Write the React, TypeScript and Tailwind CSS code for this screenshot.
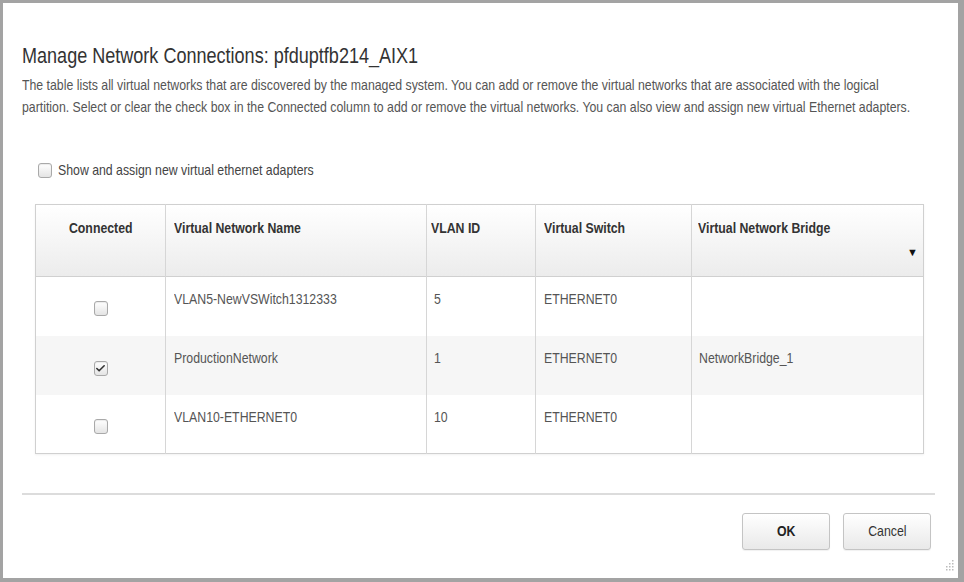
import type { ReactNode } from 'react'
import { Check } from 'lucide-react'

interface NetworkRow {
  connected: boolean
  name: string
  vlan: string
  vswitch: string
  bridge: string
}

const rows: NetworkRow[] = [
  { connected: false, name: 'VLAN5-NewVSWitch1312333', vlan: '5', vswitch: 'ETHERNET0', bridge: '' },
  { connected: true, name: 'ProductionNetwork', vlan: '1', vswitch: 'ETHERNET0', bridge: 'NetworkBridge_1' },
  { connected: false, name: 'VLAN10-ETHERNET0', vlan: '10', vswitch: 'ETHERNET0', bridge: '' },
]

// the page uses a narrow sans; squeeze Liberation Sans to Arial Narrow proportions
function Narrow({ children, center = false }: { children: ReactNode; center?: boolean }) {
  return (
    <span className={`inline-block scale-x-[0.82] whitespace-nowrap ${center ? 'origin-center' : 'origin-left'}`}>
      {children}
    </span>
  )
}

function Box({ checked }: { checked: boolean }) {
  return (
    <span className="inline-flex h-[15px] w-[14px] items-center justify-center rounded-[3px] border border-[#a9a9a9] bg-gradient-to-b from-white to-[#e4e4e4] shadow-[inset_0_1px_1px_rgba(0,0,0,0.08)]">
      {checked && <Check className="h-[11px] w-[11px] text-[#333]" strokeWidth={3.5} />}
    </span>
  )
}

export default function App() {
  return (
    <div
      className="h-[582px] w-[964px] overflow-hidden bg-[#a3a3a3] pb-[4px] pl-[3px] pr-[6px] pt-[3px]"
      style={{ fontFamily: '"Liberation Sans", Arial, sans-serif' }}
    >
      <div className="relative flex h-full flex-col overflow-hidden bg-white pl-[19px] pr-[22px] pt-[38px]">
        <h1 className="text-[22px] leading-[30px] text-[#333]">
          <Narrow>Manage Network Connections: pfduptfb214_AIX1</Narrow>
        </h1>
        <div className="mt-[3px] text-[15px] leading-[22px] text-[#555]">
          <div>
            <Narrow>
              The table lists all virtual networks that are discovered by the managed system. You can add or remove the virtual networks that are associated with the logical
            </Narrow>
          </div>
          <div>
            <Narrow>
              partition. Select or clear the check box in the Connected column to add or remove the virtual networks. You can also view and assign new virtual Ethernet adapters.
            </Narrow>
          </div>
        </div>

        <label className="mt-[43px] flex items-center gap-[6px] pl-[16px] text-[15px] leading-[18px] text-[#444]">
          <Box checked={false} />
          <Narrow>Show and assign new virtual ethernet adapters</Narrow>
        </label>

        <table className="ml-[13px] mt-[25px] w-[888px] table-fixed border-collapse border border-[#d0d0d0] text-[15px] leading-[18px] text-[#555] shadow-[0_1px_2px_rgba(0,0,0,0.06)]">
          <colgroup>
            <col className="w-[130px]" />
            <col className="w-[261px]" />
            <col className="w-[109px]" />
            <col className="w-[156px]" />
            <col className="w-[232px]" />
          </colgroup>
          <thead>
            <tr className="h-[72px] border-b border-[#d0d0d0] bg-gradient-to-b from-white to-[#ececec] text-[#333]">
              <th className="border-r border-[#d6d6d6] pt-[14px] text-center align-top font-bold">
                <Narrow center>Connected</Narrow>
              </th>
              <th className="border-r border-[#d6d6d6] pl-[8px] pt-[14px] text-left align-top font-bold">
                <Narrow>Virtual Network Name</Narrow>
              </th>
              <th className="border-r border-[#d6d6d6] pl-[4px] pt-[14px] text-left align-top font-bold">
                <Narrow>VLAN ID</Narrow>
              </th>
              <th className="border-r border-[#d6d6d6] pl-[8px] pt-[14px] text-left align-top font-bold">
                <Narrow>Virtual Switch</Narrow>
              </th>
              <th className="relative pl-[6px] pt-[14px] text-left align-top font-bold">
                <Narrow>Virtual Network Bridge</Narrow>
                <span className="absolute bottom-[18px] right-[5px] text-[11px] leading-none text-[#111]">▼</span>
              </th>
            </tr>
          </thead>
          <tbody>
            {rows.map((row, i) => (
              <tr key={row.name} className={`h-[59px] ${i === 1 ? 'bg-[#f6f6f6]' : 'bg-white'}`}>
                <td className="border-r border-[#d6d6d6] pt-[24px] text-center align-top">
                  <Box checked={row.connected} />
                </td>
                <td className="border-r border-[#d6d6d6] pl-[8px] pt-[13px] align-top">
                  <Narrow>{row.name}</Narrow>
                </td>
                <td className="border-r border-[#d6d6d6] pl-[7px] pt-[13px] align-top">
                  <Narrow>{row.vlan}</Narrow>
                </td>
                <td className="border-r border-[#d6d6d6] pl-[8px] pt-[13px] align-top">
                  <Narrow>{row.vswitch}</Narrow>
                </td>
                <td className="pl-[7px] pt-[13px] align-top">
                  <Narrow>{row.bridge}</Narrow>
                </td>
              </tr>
            ))}
          </tbody>
        </table>

        <div className="mt-[39px] h-[2px] w-[913px] bg-[#dcdcdc]" />

        <div className="mt-[18px] flex justify-end gap-[13px] pr-[5px]">
          <button className="h-[37px] w-[88px] rounded-[3px] border border-[#c4c4c4] bg-gradient-to-b from-white to-[#e9e9e9] text-[15px] font-bold text-[#222] shadow-[0_1px_1px_rgba(0,0,0,0.06)]">
            <Narrow center>OK</Narrow>
          </button>
          <button className="h-[37px] w-[88px] rounded-[3px] border border-[#c4c4c4] bg-gradient-to-b from-white to-[#e9e9e9] text-[15px] text-[#333] shadow-[0_1px_1px_rgba(0,0,0,0.06)]">
            <Narrow center>Cancel</Narrow>
          </button>
        </div>

        <svg className="absolute bottom-[6px] right-[4px]" width="10" height="12" viewBox="0 0 10 12">
          {[[8, 0], [8, 3], [5, 3], [8, 6], [5, 6], [2, 6], [8, 9], [5, 9], [2, 9]].map(([x, y]) => (
            <rect key={`${x}-${y}`} x={x} y={y} width="1.5" height="1.5" fill="#bbb" />
          ))}
        </svg>
      </div>
    </div>
  )
}
